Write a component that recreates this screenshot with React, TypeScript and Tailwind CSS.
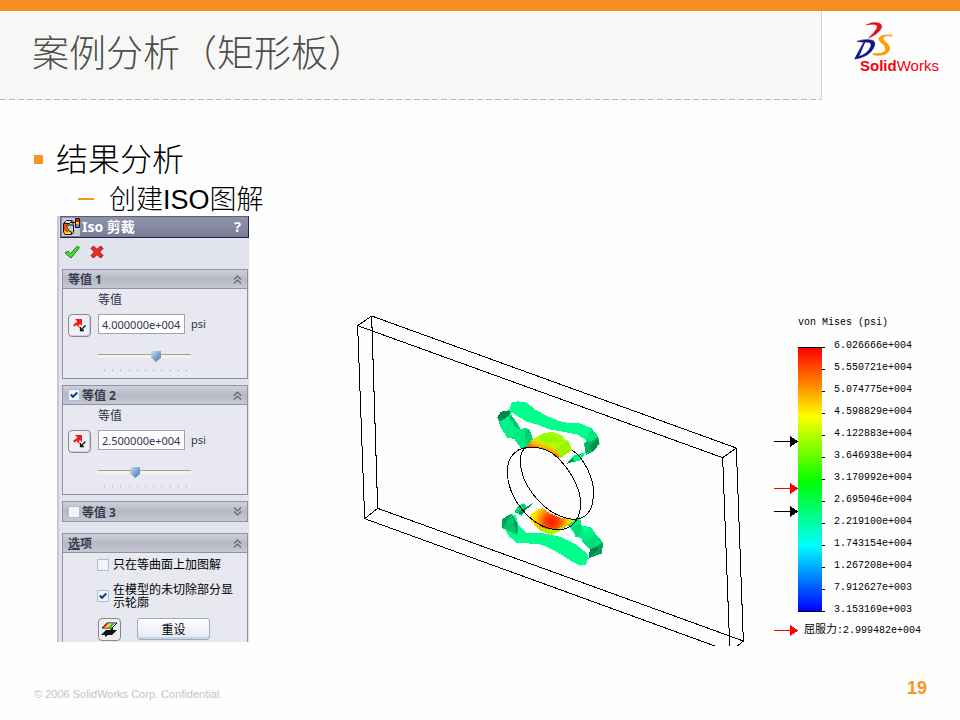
import { useState } from 'react'
import type { ReactNode } from 'react'

const uiFont = "font-['Noto_Sans','Noto_Sans_CJK_SC',sans-serif]"

const stressLevels = [
  '6.026666e+004', '5.550721e+004', '5.074775e+004', '4.598829e+004', '4.122883e+004',
  '3.646938e+004', '3.170992e+004', '2.695046e+004', '2.219100e+004', '1.743154e+004',
  '1.267208e+004', '7.912627e+003', '3.153169e+003',
]

function Logo() {
  return (
    <div className="flex w-[138px] shrink-0 flex-col pt-2.5 pl-8">
      <svg viewBox="160 60 120 117" className="h-[39px] w-10" strokeWidth="2" strokeLinejoin="round" aria-hidden="true">
        <path d="M197 72Q214 62 233 66Q247 70 241 83Q233 98 204 111Q222 94 229 82Q233 71 218 70Q208 69 197 72Z" fill="#e60f1a" stroke="#e60f1a" />
        <path fillRule="evenodd" d="M169 121Q198 112 217 119Q227 124 218 142Q205 168 162 174L177 146L186 130L190 124ZM193 123L174 167Q200 160 210 138Q217 122 193 123Z" fill="#10108c" stroke="#10108c" />
        <path d="M274 103Q247 99 237 108Q230 117 243 126Q259 137 253 149Q248 159 216 158Q216 162 229 163Q258 164 265 149Q271 136 257 125Q242 114 250 107Q257 102 274 106Z" fill="#ff9a00" stroke="#ff9a00" />
      </svg>
      <div className="-mt-1 pl-1.5 text-[15px] leading-5 whitespace-nowrap text-[#f00010]">
        <span className="font-bold">Solid</span>Works
      </div>
    </div>
  )
}

function Chevrons({ down = false }: { down?: boolean }) {
  return (
    <svg viewBox="0 0 9 9" className="size-[9px]" fill="none" stroke="#62657a" strokeWidth="1.2" aria-hidden="true">
      <path d={down ? 'M1 .5l3.5 3.5L8 .5M1 4.5L4.5 8L8 4.5' : 'M1 4.5L4.5 1L8 4.5M1 8.5L4.5 5L8 8.5'} />
    </svg>
  )
}

function Tick({ label, id, initial }: { label?: string; id: string; initial: boolean }) {
  const [on, setOn] = useState(initial)
  return (
    <span className="grid shrink-0 place-items-center">
      <input
        id={id}
        type="checkbox"
        aria-label={label}
        checked={on}
        onChange={() => setOn(!on)}
        className="col-start-1 row-start-1 size-3 appearance-none border border-[#a9bfdb] bg-[#f0f5fb]"
      />
      {on && (
        <svg viewBox="0 0 8 8" className="pointer-events-none col-start-1 row-start-1 size-2" fill="none" stroke="#123f82" strokeWidth="2" aria-hidden="true">
          <path d="M.8 3.5L3 5.8L7.3 1.5" />
        </svg>
      )}
    </span>
  )
}

function Group({ title, lead, open = true, children }: { title: ReactNode; lead?: ReactNode; open?: boolean; children?: ReactNode }) {
  return (
    <section className="border border-[#8f92a6] bg-[#e7e8f0]">
      <div className={`flex h-[19px] items-center gap-0.5 bg-linear-to-b from-[#cfd1da] via-[#b6b8c4] to-[#c6c8d2] pr-1 pl-[5px] ${open ? 'border-b border-[#8f92a6]' : ''}`}>
        {lead}
        <h3 className="flex-1 pt-0.5 text-[12px] leading-4 font-bold text-[#383b50]">{title}</h3>
        <button type="button" aria-label={open ? '折叠' : '展开'} className="p-px">
          <Chevrons down={!open} />
        </button>
      </div>
      {children}
    </section>
  )
}

function DirectionButton() {
  return (
    <button type="button" aria-label="反向" className="grid size-[23px] place-items-center rounded-[4px] border border-[#85879a] bg-[#f0eff3] shadow-[inset_-1px_-1px_0_#cfcfd8]">
      <svg viewBox="0 0 15 15" className="size-[15px]" aria-hidden="true">
        <path d="M3 1H10V8L8 6L6.500 7.500L8.500 9.500L7 9.500L4.500 7L2.500 8.500L1 7L5.500 3.500Z" fill="#fb1414" />
        <path d="M13.500 7.500L9 12M8.500 9V12.500H12" stroke="#111" strokeWidth="1.300" fill="none" />
      </svg>
    </button>
  )
}

function IsoValue({ id, value, slider }: { id: string; value: string; slider: number }) {
  return (
    <div className="flex h-[89px] pt-1 pl-[5px]">
      <div className="w-[30px] pt-[21px]"><DirectionButton /></div>
      <div>
        <label htmlFor={id} className="block text-[12px] leading-[14px] text-[#30334a]">等值</label>
        <div className="mt-[7px] flex h-5 items-center gap-1.5 text-[11px] text-[#30334a]">
          <input id={id} defaultValue={value} className="h-5 w-[87px] border border-[#9ba5b5] bg-white px-[3px] text-[11px] text-[#30334a]" />
          <span>psi</span>
        </div>
        <input
          type="range"
          aria-label="等值滑块"
          min={0}
          max={100}
          defaultValue={slider}
          className="mt-4 block h-3 w-[93px] appearance-none bg-transparent [&::-webkit-slider-runnable-track]:h-1 [&::-webkit-slider-runnable-track]:border-t [&::-webkit-slider-runnable-track]:border-[#a0a0a0] [&::-webkit-slider-runnable-track]:bg-[#f6f3e4] [&::-webkit-slider-thumb]:-mt-1 [&::-webkit-slider-thumb]:h-[11px] [&::-webkit-slider-thumb]:w-[10px] [&::-webkit-slider-thumb]:appearance-none [&::-webkit-slider-thumb]:bg-linear-to-br [&::-webkit-slider-thumb]:from-[#c9e2fa] [&::-webkit-slider-thumb]:to-[#3f6fa8] [&::-webkit-slider-thumb]:[clip-path:polygon(0_0,100%_0,100%_60%,50%_100%,0_60%)]"
        />
        <div className="mt-2 flex w-[89px] justify-between pl-1.5" aria-hidden="true">
          {Array.from({ length: 11 }, (_, i) => <i key={i} className="size-px bg-[#9b9b92]" />)}
        </div>
      </div>
    </div>
  )
}

function PropertyPanel() {
  return (
    <aside className={`h-[426px] w-48 shrink-0 overflow-hidden border-l-2 border-[#c3c8d8] bg-[#e1e4ed] pl-px ${uiFont}`}>
      <header className="flex h-[22px] items-center border border-r-[#20234a] border-b-[#20234a] border-t-[#5c6078] border-l-[#5c6078] bg-linear-to-b from-[#8f93aa] via-[#858aa2] to-[#777c94] px-px">
        <svg viewBox="0 0 18 18" className="size-[18px] shrink-0" aria-hidden="true">
          <path d="M0 0h18v18H0z" fill="#c9cad2" />
          <path d="M1.500 5.500L4.500 2.500H10L7.500 5.500Z" fill="#e8e8ec" stroke="#111" />
          <path d="M1.500 5.500H5V9.500L7 13L9.500 14V16.500H3L1.500 14Z" fill="#ffd800" stroke="#111" />
          <path d="M2 6H4V10L6.500 14H4L2 12Z" fill="#f24a00" />
          <path d="M5.500 7H11.500V14.500L9.500 16.500" fill="none" stroke="#111" />
          <path d="M9 4.500H13M11 2.500V6.500" stroke="#111" />
          <path d="M14 1h3v3h-3z" fill="#e81313" /><path d="M14 4h3v2h-3z" fill="#ffdd00" /><path d="M14 6h3v3h-3z" fill="#6a8ae0" />
          <path d="M13.500 .5h4v9h-4z" fill="none" stroke="#111" />
        </svg>
        <h2 className="flex-1 pl-0.5 text-[14px] leading-5 font-bold text-white">Iso 剪裁</h2>
        <button type="button" aria-label="帮助" className="px-1.5 text-[14px] leading-5 font-bold text-white">?</button>
      </header>
      <div className="flex h-[31px] items-start gap-2.5 pt-[7px] pl-1">
        <button type="button" aria-label="确定">
          <svg viewBox="0 0 16 14" className="h-3.5 w-4" aria-hidden="true">
            <path d="M1 8L4 6L6.500 8.500L13.500 1L15.500 2.500L7 13Z" fill="#48dc35" stroke="#167a16" />
          </svg>
        </button>
        <button type="button" aria-label="取消">
          <svg viewBox="0 0 14 14" className="size-3.5" aria-hidden="true">
            <path d="M3.500 1L7 4.500L10.500 1L13 3.500L9.500 7L13 10.500L10.500 13L7 9.500L3.500 13L1 10.500L4.500 7L1 3.500Z" fill="#ef2b22" stroke="#971010" />
          </svg>
        </button>
      </div>
      <div className="flex flex-col gap-1.5 pr-px pl-0.5">
        <Group title="等值 1"><IsoValue id="iso1" value="4.000000e+004" slider={64} /></Group>
        <Group title="等值 2" lead={<Tick id="use2" label="启用等值 2" initial />}>
          <IsoValue id="iso2" value="2.500000e+004" slider={39} />
        </Group>
        <Group title="等值 3" open={false} lead={<Tick id="use3" label="启用等值 3" initial={false} />} />
        <div className="pt-[5px]">
          <Group title={<><u>选</u>项</>}>
            <div className="flex h-[100px] flex-col pt-[5px] pl-[34px] text-[12px] leading-[13px] text-black">
              <div className="flex items-center gap-1">
                <Tick id="surface" initial={false} />
                <label htmlFor="surface">只在等曲面上加图解</label>
              </div>
              <div className="mt-3 flex items-center gap-1">
                <Tick id="outline" initial />
                <label htmlFor="outline" className="w-[124px]">在模型的未切除部分显示轮廓</label>
              </div>
              <div className="mt-[9px] flex gap-4 pl-px">
                <button type="button" aria-label="图解设定" className="grid size-[23px] shrink-0 place-items-center rounded-[4px] border border-[#85879a] bg-[#efeef2]">
                  <svg viewBox="0 0 17 16" className="h-4 w-[17px]" aria-hidden="true">
                    <path d="M6 1H16L11 6H1Z" fill="#fff" stroke="#111" />
                    <path d="M6 1.500H8L4 5.500H2Z" fill="#f22" /><path d="M8 1.500h3L7 5.500H4Z" fill="#fd0" /><path d="M11 1.500h3L10 5.500H7Z" fill="#1c4" />
                    <path d="M5 8H9L12 5V8H16L11 13H7L4 15V13H0Z" fill="#111" />
                  </svg>
                </button>
                <button type="button" className="h-[22px] w-[73px] rounded-[3px] border border-[#9eabc0] bg-linear-to-b from-white to-[#e3e8f1] text-[12px] shadow-[inset_0_-2px_0_#c8d4e6]">重设</button>
              </div>
            </div>
          </Group>
        </div>
      </div>
    </aside>
  )
}

function PlatePlot() {
  return (
    <svg viewBox="0 0 1230 1038" className="h-[346px] w-[410px]" role="img" aria-label="矩形板 von Mises 应力 ISO 图解">
      <defs>
        <radialGradient id="hot" gradientUnits="userSpaceOnUse" cx="215" cy="395" r="72">
          <stop offset="0" stopColor="#ff1800" /><stop offset=".3" stopColor="#ff4800" />
          <stop offset=".58" stopColor="#ffb000" /><stop offset=".8" stopColor="#fff000" /><stop offset="1" stopColor="#b4f000" />
        </radialGradient>
        <linearGradient id="warm" gradientUnits="userSpaceOnUse" x1="188" y1="186" x2="202" y2="150">
          <stop offset="0" stopColor="#ff5000" /><stop offset=".35" stopColor="#ffb000" />
          <stop offset=".7" stopColor="#c0f800" /><stop offset="1" stopColor="#a0ff00" />
        </linearGradient>
      </defs>
      <g fill="none" stroke="#000" strokeWidth="3" shapeRendering="crispEdges">
        <path d="M38 77L80 48L1174 444L1133 473ZM38 77L59 656L98 625L80 48M59 656L1110 1038M98 625L1195 1023L1174 444M1133 473L1154 1038M1195 1023L1177 1038" />
      </g>
      <g transform="translate(405 270)" shapeRendering="crispEdges">
        <path d="M95 38L112 34L140 38L168 60L205 80L250 97L300 100L335 115L355 140L359 162L340 184L318 195L313 168L318 150L292 134L250 125L210 119L175 105L140 95L100 70L86 66Z" fill="#00ff8c" />
        <path d="M355 140L359 162L340 184L318 195L313 160L332 147Z" fill="#00b45f" />
        <path d="M335 115L355 140L330 156L318 150Z" fill="#00e57d" /><path d="M345 150L359 152L342 184L325 177Z" fill="#00914e" />
        <path d="M52 82L62 65L90 60L95 78L112 98L122 117L138 114L149 120L158 146L140 172L124 177L102 146L82 144L62 112Z" fill="#00e880" />
        <path d="M52 82L62 65L92 62L86 80L62 94Z" fill="#00894a" />
        <path d="M62 94L86 78L102 98L120 118L94 144L82 144L62 112Z" fill="#00f28a" />
        <path d="M86 78L95 78L120 117L108 114Z" fill="#00c06c" />
        <path d="M138 114L149 120L158 146L145 164L134 150Z" fill="#00d273" />
        <path d="M258 223L281 196L317 187L302 211L280 216L270 213Z" fill="#00f28a" />
        <path d="M258 223L279 203L282 214Z" fill="#009653" />
        <path d="M139 171L155 150L187 131L214 125L244 135L263 157L276 181L258 190L236 207L208 183L170 172Z" fill="url(#warm)" />
        <path d="M176 147L211 133L235 144L249 153L236 160L219 153L202 161ZM235 175L264 150L276 181L236 207Z" fill="#9cf500" />
        <path d="M148 378L168 361L188 354L208 369L237 382L285 388L262 407L237 424L214 435L180 421L155 398Z" fill="url(#hot)" />
        <path d="M160 397L184 414L225 419L259 405L237 424L214 435L184 421Z" fill="#adf000" />
        <path d="M65 388L94 371L108 377L115 406L140 430L190 430L240 440L290 465L319 489L325 497L318 524L300 527L270 511L230 485L185 464L140 460L110 458L88 440L70 410Z" fill="#00ff8c" />
        <path d="M65 388L94 371L88 399L68 418Z" fill="#00a55b" /><path d="M94 371L115 406L112 435L69 415Z" fill="#00c56e" />
        <path d="M94 371L111 400L111 430Z" fill="#009653" />
        <path d="M103 367L116 346L132 339L139 350L162 338L133 364L125 377Z" fill="#00d777" />
        <path d="M116 365L162 338L133 364L125 377Z" fill="#009653" />
        <path d="M285 390L300 380L304 406L335 413L346 430L369 457L366 490L325 506L331 480L309 459L303 444L290 440L274 418L262 405Z" fill="#00f084" />
        <path d="M309 459L342 435L369 457L355 475L331 480ZM278 406L302 401L304 432L287 442Z" fill="#00dc79" />
        <path d="M331 480L369 457L366 490L325 506Z" fill="#00a55b" /><path d="M330 478L352 470L355 480L325 506Z" fill="#00884a" />
        <path d="M303 407L335 417L315 428Z" fill="#00ff90" />
        <g fill="none" stroke="#000" strokeWidth="3">
          <path d="M140 172C178 169 208 177 235 205C276 246 304 305 302 343C300 388 277 419 235 419C188 419 149 387 126 358C98 323 82 287 82 245C82 208 101 178 140 172" />
          <path d="M276 181C310 200 345 268 340 317C338 360 319 388 280 388C222 383 185 344 159 313C130 275 120 238 121 207Q123 181 139 172" />
        </g>
      </g>
    </svg>
  )
}

function Arrow({ className = '' }: { className?: string }) {
  return (
    <svg viewBox="0 0 24 12" className={`h-3 w-6 shrink-0 ${className}`} fill="currentColor" aria-hidden="true">
      <path d="M0 5H16V0L24 5.500L16 11V6H0Z" shapeRendering="crispEdges" />
    </svg>
  )
}

function Legend() {
  return (
    <div className="flex w-[152px] shrink-0 flex-col font-['Liberation_Mono','Noto_Sans_CJK_SC',monospace] text-[10px] leading-[12px] whitespace-nowrap text-black">
      <h3 className="pl-6">von Mises (psi)</h3>
      <div className="mt-1.5 flex">
        <div className="flex w-6 flex-col pt-[101px]">
          <Arrow />
          <Arrow className="mt-[35px] text-[#f00]" />
          <Arrow className="mt-[11px]" />
        </div>
        <div className="mt-3 h-[265px] w-6 border-y border-black bg-[linear-gradient(to_bottom,#f00,#ff0_26%,#0f0_51%,#0ff_75%,#00f)]" />
        <div className="mt-3 flex h-[265px] w-3 flex-col justify-between">
          {stressLevels.map((v) => <i key={v} className="h-px w-[3px] bg-black" />)}
        </div>
        <ul>
          {stressLevels.map((v) => <li key={v} className="h-[22px] leading-[22px]">{v}</li>)}
        </ul>
      </div>
      <div className="mt-[3px] flex items-center">
        <Arrow className="text-[#f00]" />
        <span className="pl-1.5"><span className="text-[11px]">屈服力</span>:2.999482e+004</span>
      </div>
    </div>
  )
}

export default function App() {
  return (
    <div className="flex min-h-screen flex-col bg-[#fefefe] font-['Liberation_Sans','Noto_Sans_CJK_SC',sans-serif]">
      <header className="flex h-[100px] border-t-[11px] border-[#f78d1e]">
        <div className="flex flex-1 flex-col border-r border-[#d4d4cf] bg-[#f7f7f5]">
          <h1 className="flex-1 pt-[22px] pl-8 text-[37px] leading-[44px] font-light text-[#4d4d4d]">案例分析（矩形板）</h1>
          <div className="h-px bg-[repeating-linear-gradient(to_right,#b9b9ae_0_6px,transparent_6px_9px)]" />
        </div>
        <Logo />
      </header>
      <main className="flex-1">
        <div className="flex items-center gap-[13px] pt-10 pl-[34px]">
          <span className="size-[9px] bg-[#f7941d]" />
          <h2 className="pt-0.5 text-[32px] leading-9 font-light text-black">结果分析</h2>
        </div>
        <div className="flex items-center gap-[15px] pt-1 pl-[78px]">
          <span className="h-0.5 w-4 bg-[#f7941d]" />
          <p className="pt-0.5 text-[27px] leading-8 font-light text-black">创建ISO图解</p>
        </div>
        <div className="flex items-start pr-[34px] pl-[57px]">
          <PropertyPanel />
          <div className="flex flex-1 items-start justify-between pt-[84px] pl-24">
            <PlatePlot />
            <div className="pt-[17px]"><Legend /></div>
          </div>
        </div>
      </main>
      <footer className="flex items-center justify-between pr-[33px] pb-[18px] pl-[34px]">
        <small className="pt-3 text-[11px] leading-4 text-[#c9c4bb]">© 2006 SolidWorks Corp. Confidential.</small>
        <span className="text-[18px] leading-6 font-bold text-[#f7941d]">19</span>
      </footer>
    </div>
  )
}
